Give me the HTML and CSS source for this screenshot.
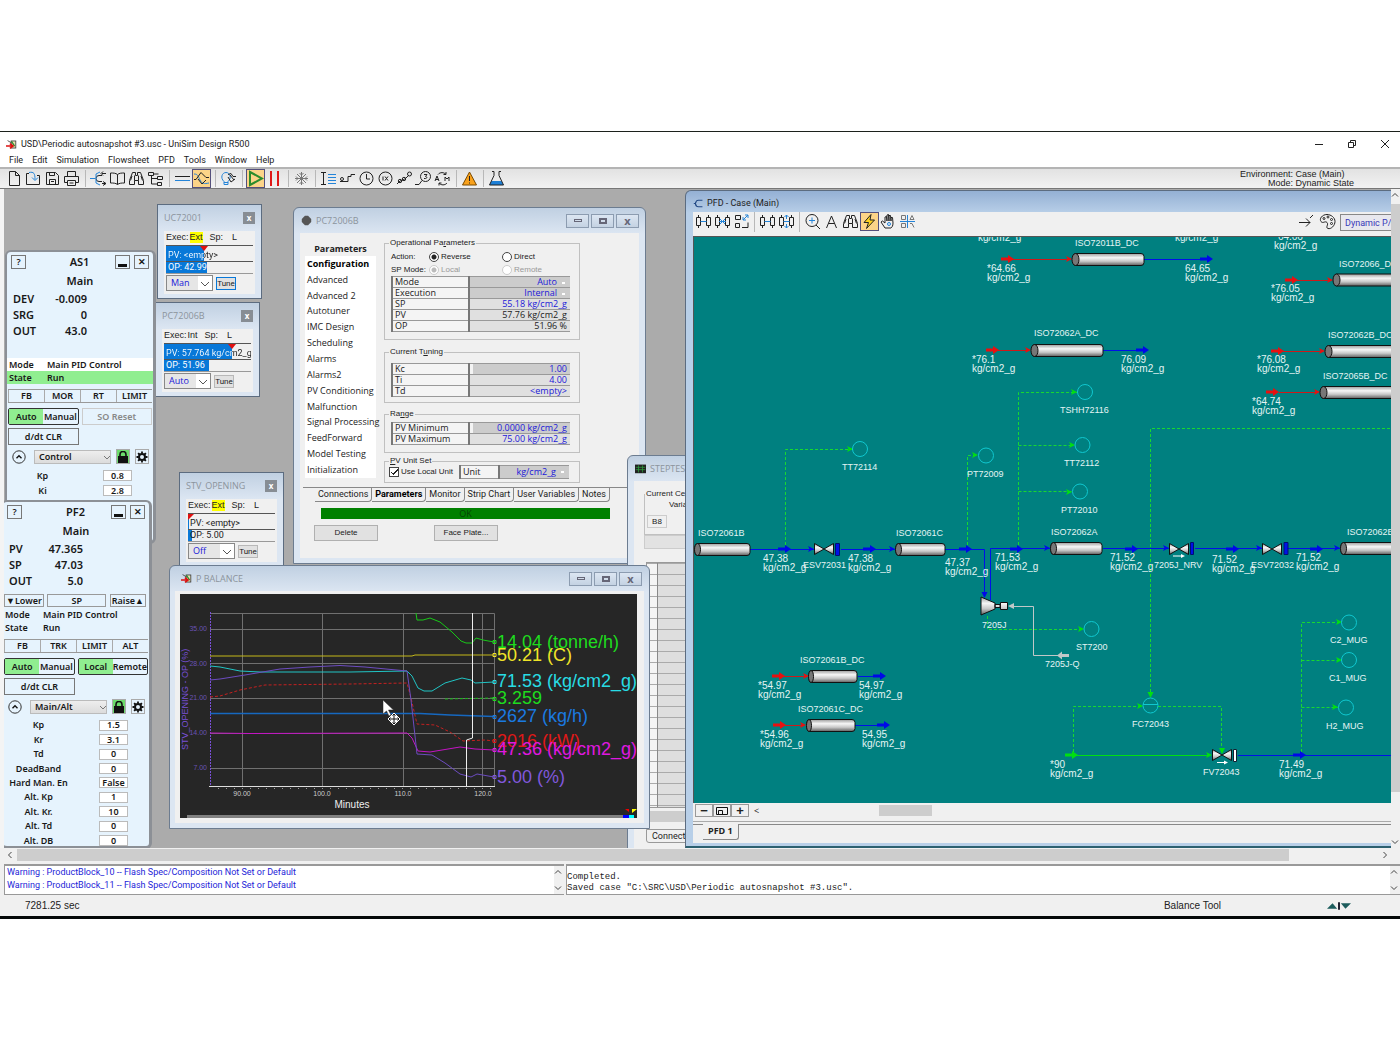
FILE: index.html
```html
<!DOCTYPE html>
<html lang="en">
<head>
<meta charset="utf-8">
<title>UniSim Design R500</title>
<link rel="stylesheet" href="styles.css">
</head>
<body>
<svg class="defs" aria-hidden="true">
  <defs>
    <symbol id="i-trend" viewBox="0 0 14 14"><rect x="6.500" y="2.500" width="6" height="9" fill="#e8e0b0" stroke="#333"/><path d="M7 3l4 6" stroke="#2a8a2a" stroke-width="1.500"/><path d="M0 9h8M5 6l4 3-4 3" stroke="#d11" stroke-width="2" fill="none"/><path d="M2 2l5 3" stroke="#333"/></symbol>
    <symbol id="i-binoc" viewBox="0 0 17 17"><path d="M1.500 14.500h5v-4h4v4h5v-4L12.500 2.500h-3v3h-2v-3h-3L1.500 10.500zM6.500 10.500v-5M10.500 10.500v-5M4 6l-1.500 4.500M13 6l1.500 4.500"/></symbol>
    <symbol id="i-vessels" viewBox="0 0 17 17"><path d="M1.500 4.500h4v8h-4zM11.500 4.500h4v8h-4zM3.500 2v2.500M3.500 12.500V15M13.500 2v2.500M13.500 12.500V15"/><path d="M5.500 8.500h6" stroke="#2484d8"/></symbol>
    <symbol id="i-lock" viewBox="0 0 12 12"><rect x="1" y="5" width="10" height="7" fill="#111"/><path d="M3 5V3.500a3 3 0 0 1 6 0V5" fill="none" stroke="#111" stroke-width="1.600"/></symbol>
    <symbol id="i-gear" viewBox="0 0 12 12"><circle cx="6" cy="6" r="3" fill="none" stroke="#111" stroke-width="2"/><path d="M6 .5v2M6 9.500v2M.5 6h2M9.500 6h2M2.100 2.100l1.400 1.400M8.500 8.500l1.400 1.400M9.900 2.100L8.500 3.500M3.500 8.500L2.100 9.900" stroke="#111" stroke-width="1.800"/></symbol>
    <symbol id="i-up" viewBox="0 0 14 14"><circle cx="7" cy="7" r="6.200" fill="none" stroke="#333"/><path d="M4.500 8.200L7 5.800l2.500 2.400" fill="none" stroke="#111" stroke-width="1.400"/></symbol>
    <linearGradient id="steel" x1="0" y1="0" x2="0" y2="1"><stop offset="0" stop-color="#9c9c9c"/><stop offset=".35" stop-color="#f6f6f6"/><stop offset=".65" stop-color="#c8c8c8"/><stop offset="1" stop-color="#5e5e5e"/></linearGradient>
    <symbol id="s-arrow" viewBox="0 0 13 8"><path d="M0 2.500h7V0l6 4-6 4V5.500H0z" fill="currentColor"/></symbol>
    <symbol id="s-head" viewBox="0 0 6 6"><path d="M0 0l6 3-6 3 1.500-3z" fill="currentColor"/></symbol>
    <symbol id="s-valve" viewBox="0 0 20 12"><path d="M.5.500L10 6 .5 11.500zM19.500.500L10 6l9.500 5.500z" fill="url(#steel)" stroke="#111"/></symbol>
  </defs>
</svg>

<main class="app">
  <header class="titlebar">
    <svg class="ico" viewBox="0 0 14 14"><use href="#i-trend"/></svg>
    <h1>USD\Periodic autosnapshot #3.usc - UniSim Design R500</h1>
    <div class="syscmds">
      <button aria-label="Minimize"><svg viewBox="0 0 10 10"><path d="M1 5.500h8"/></svg></button>
      <button aria-label="Restore"><svg viewBox="0 0 10 10"><path d="M1.500 3.500h5v5h-5zM3.500 3.500v-2h5v5h-2"/></svg></button>
      <button aria-label="Close"><svg viewBox="0 0 10 10"><path d="M1 1l8 8M9 1L1 9"/></svg></button>
    </div>
  </header>
  <nav class="menubar">
    <a href="#">File</a><a href="#">Edit</a><a href="#">Simulation</a><a href="#">Flowsheet</a><a href="#">PFD</a><a href="#">Tools</a><a href="#">Window</a><a href="#">Help</a>
  </nav>
  <div class="toolbar">
    <button aria-label="New"><svg viewBox="0 0 17 17"><path d="M3.500 1.500h6l4 4v10h-10zM9.500 1.500v4h4"/></svg></button>
    <button aria-label="Open"><svg viewBox="0 0 17 17"><path d="M4 3.500H1.500v11h13v-9H12"/><path class="b" d="M4 2.500c5-1 6 1 6 7M7 7.500l3 3 3-3"/></svg></button>
    <button aria-label="Save"><svg viewBox="0 0 17 17"><path d="M2.500 2.500h9l3 3v9h-12zM5.500 2.500v3h5v-3M5.500 14.500v-5h6v5M7 11.500h3"/></svg></button>
    <button aria-label="Print"><svg viewBox="0 0 17 17"><path d="M4.500 6.500v-5h8v5M4.500 12.500h-3v-6h14v6h-3M4.500 10.500h8v5h-8zM6.500 13h4"/></svg></button>
    <i class="sep"></i>
    <button aria-label="Flowsheet"><svg viewBox="0 0 17 17"><path d="M16 3.500h-4M16 13.500h-4M12 5.500H9a3 3 0 0 0 0 6h3M13 1.500l-2 2 2 2M13 11.500l3 2-3 2"/><path class="b" d="M0 8.500h5M10 2L6 4v9l4 2"/></svg></button>
    <button aria-label="Workbook"><svg viewBox="0 0 17 17"><path d="M8.500 4.500c-2-1.500-4-1.500-7-1.500v10c3 0 5 0 7 1.500 2-1.500 4-1.500 7-1.500V3c-3 0-5 0-7 1.500zv10"/></svg></button>
    <button aria-label="Find"><svg viewBox="0 0 17 17"><use href="#i-binoc"/></svg></button>
    <button aria-label="Navigator"><svg viewBox="0 0 17 17"><path d="M1.500 2.500h5v3h-5zM10.500 6.500h5v3h-5zM10.500 12.500h4v3h-4zM4.500 5.500v8.500h6M4.500 8.500h6M6.500 4h5"/></svg></button>
    <i class="sep"></i>
    <button aria-label="Steady state"><svg viewBox="0 0 17 17"><path d="M1 6.500h15"/><path class="b" d="M1 10.500h15"/></svg></button>
    <button class="on" aria-label="Dynamics"><svg viewBox="0 0 17 17"><path class="b" d="M1 4c4 0 4 2 6 6s4 4 9 3"/><path d="M1 9.500h2l5-7 5 5h3M5 9l4 5 4-4"/></svg></button>
    <i class="sep"></i>
    <button aria-label="Assistant"><svg viewBox="0 0 17 17"><path class="b" d="M4 11.500C0 8 2 2.500 6 2.500S12 8 8 11.500v3H4zM4 12.500h4"/><path d="M8 4.500l3-1 2 3h3M8 7l3 5 4-3M10 5l4 5"/></svg></button>
    <i class="sep"></i>
    <button class="on" aria-label="Run"><svg viewBox="0 0 17 17"><path class="g" d="M3 2l12 6.500L3 15z"/></svg></button>
    <button aria-label="Hold"><svg viewBox="0 0 17 17"><path class="r" d="M5 1v15M12 1v15"/></svg></button>
    <i class="sep"></i>
    <button aria-label="Freeze"><svg viewBox="0 0 17 17"><path class="m" d="M8.500 2v13M2 8.500h13M4 4l9 9M13 4l-9 9M6.500 3l2 2 2-2M6.500 14l2-2 2 2M3 6.500l2 2-2 2M14 6.500l-2 2 2 2"/></svg></button>
    <i class="sep"></i>
    <button aria-label="Integrator"><svg viewBox="0 0 17 17"><path d="M1 2.500h5M3.500 2.500v12M1 14.500h5"/><path class="b" d="M8 4.500h8M8 7.500h8M8 10.500h8M8 13.500h8"/></svg></button>
    <button aria-label="Ramp"><svg viewBox="0 0 17 17"><path d="M6 11.500h3v-5h3v-2h4M1 11.500h5"/><circle cx="3" cy="9" r="1.500"/></svg></button>
    <button aria-label="Schedule"><svg viewBox="0 0 17 17"><circle cx="8.500" cy="8.500" r="6.500"/><path d="M8.500 4v5h3.500"/></svg></button>
    <button aria-label="Speed"><svg viewBox="0 0 17 17"><circle cx="8.500" cy="8.500" r="6.500"/><path d="M6 6.500v4M8 6.500l3 4M11 6.500l-3 4"/></svg></button>
    <button aria-label="Events"><svg viewBox="0 0 17 17"><path d="M1 14l3-3 3-1 3-2 3-3"/><circle cx="4" cy="11" r="1.700"/><circle cx="8" cy="9" r="1.700"/><circle cx="13.500" cy="4" r="2"/></svg></button>
    <button aria-label="Snapshot"><svg viewBox="0 0 17 17"><circle cx="10.500" cy="6.500" r="5"/><path d="M9 4.500h3l-1.500 2c2 0 2 2.500-1.500 2M7 10.500l-3 4H0"/></svg></button>
    <button aria-label="Cycle"><svg viewBox="0 0 17 17"><path d="M4 4.500c2-2.500 6-2.500 8 0V2M12 4.500H9.500M13 13c-2 2.500-6 2.500-8 0v2.500M5 13h2.500M1 11l2-5 2 5M1.500 9.500h3M11 11V7l2 2 2-2v4"/></svg></button>
    <i class="sep"></i>
    <button aria-label="Warnings"><svg viewBox="0 0 17 17"><path d="M8.500 2l7 13h-14z" fill="#f9a11b" stroke="#7a4a00"/><path d="M8.500 6v5M8.500 12.500v1"/></svg></button>
    <i class="sep"></i>
    <button aria-label="Lab"><svg viewBox="0 0 17 17"><path d="M3.500 11h10l2 4h-14z" fill="#1d7fd6" stroke="none"/><path d="M4 1.500h2v4L1.500 15h14L11 5.500v-4h2"/></svg></button>
    <p class="env">Environment: Case (Main)<br><span>Mode: Dynamic State</span></p>
  </div>

  <div class="workspace">
    <div class="desktop">

      <section class="win mini uc">
        <header><h2>UC72001</h2><button class="x" aria-label="Close">x</button></header>
        <div class="mbody">
          <p class="exec">Exec: <mark>Ext</mark><span>Sp:</span><span>L</span></p>
          <div class="bar pv"><b class="fill" style="width:44%"></b><span class="two-tone">PV: &lt;empty&gt;</span></div>
          <div class="bar op"><b class="fill" style="width:47%"></b><span class="light">OP: 42.99</span></div>
          <div class="act"><select aria-label="UC72001 mode"><option>Man</option></select><button class="focus">Tune</button></div>
        </div>
      </section>

      <section class="win mini pcs">
        <header><h2>PC72006B</h2><button class="x" aria-label="Close">x</button></header>
        <div class="mbody">
          <p class="exec">Exec:<em>Int</em><span>Sp:</span><span>L</span></p>
          <div class="bar pv"><b class="fill" style="width:78%"></b><span class="two-tone far">PV: 57.764 kg/cm2_g</span></div>
          <div class="bar op"><b class="fill" style="width:52%"></b><span class="light">OP: 51.96</span></div>
          <div class="act"><select aria-label="PC72006B mode"><option>Auto</option></select><button>Tune</button></div>
        </div>
      </section>

      <section class="win mini stv">
        <header><h2>STV_OPENING</h2><button class="x" aria-label="Close">x</button></header>
        <div class="mbody">
          <p class="exec">Exec: <mark>Ext</mark><span>Sp:</span><span>L</span></p>
          <div class="bar pv"><b class="fill zero" style="width:1%"></b><span>PV: &lt;empty&gt;</span></div>
          <div class="bar op"><b class="fill" style="width:5%"></b><span>OP: 5.00</span></div>
          <div class="act"><select aria-label="STV_OPENING mode"><option>Off</option></select><button>Tune</button></div>
        </div>
      </section>

      <section class="plate as1">
        <header><button>?</button><h2>AS1</h2><button aria-label="Minimize" class="min"></button><button>✕</button></header>
        <h3>Main</h3>
        <dl class="big"><dt>DEV</dt><dd>-0.009</dd><dt>SRG</dt><dd>0</dd><dt>OUT</dt><dd>43.0</dd></dl>
        <div class="cmd"></div>
        <dl class="state"><dt class="w">Mode</dt><dd class="w">Main PID Control</dd><dt class="gr">State</dt><dd class="gr">Run</dd></dl>
        <div class="flags"><span>FB</span><span>MOR</span><span>RT</span><span>LIMIT</span></div>
        <div class="modes"><div class="tog"><button class="sel">Auto</button><button>Manual</button></div><button class="wide" disabled>SO Reset</button></div>
        <div class="modes"><button class="wide">d/dt CLR</button></div>
        <div class="pick"><svg viewBox="0 0 14 14"><use href="#i-up"/></svg><select aria-label="AS1 parameter set"><option>Control</option></select><button class="lock" aria-label="Lock"><svg viewBox="0 0 12 12"><use href="#i-lock"/></svg></button><button aria-label="Settings"><svg viewBox="0 0 12 12"><use href="#i-gear"/></svg></button></div>
        <div class="params">
          <label>Kp <input value="0.8"></label><label>Ki <input value="2.8"></label>
        </div>
      </section>

      <section class="plate pf2">
        <header><button>?</button><h2>PF2</h2><button aria-label="Minimize" class="min"></button><button>✕</button></header>
        <h3>Main</h3>
        <dl class="big"><dt>PV</dt><dd>47.365</dd><dt>SP</dt><dd>47.03</dd><dt>OUT</dt><dd>5.0</dd></dl>
        <div class="cmd"><button>▼Lower</button><button class="sp">SP</button><button>Raise▲</button></div>
        <dl class="state"><dt>Mode</dt><dd>Main PID Control</dd><dt>State</dt><dd>Run</dd></dl>
        <div class="flags"><span>FB</span><span>TRK</span><span>LIMIT</span><span>ALT</span></div>
        <div class="modes"><div class="tog"><button class="sel">Auto</button><button>Manual</button></div><div class="tog"><button class="sel">Local</button><button>Remote</button></div></div>
        <div class="modes"><button class="wide">d/dt CLR</button></div>
        <div class="pick"><svg viewBox="0 0 14 14"><use href="#i-up"/></svg><select aria-label="PF2 parameter set"><option>Main/Alt</option></select><button class="lock" aria-label="Lock"><svg viewBox="0 0 12 12"><use href="#i-lock"/></svg></button><button aria-label="Settings"><svg viewBox="0 0 12 12"><use href="#i-gear"/></svg></button></div>
        <div class="params">
          <label>Kp <input value="1.5"></label><label>Kr <input value="3.1"></label><label>Td <input value="0"></label><label>DeadBand <input value="0"></label><label>Hard Man. En <input value="False"></label><label>Alt. Kp <input value="1"></label><label>Alt. Kr. <input value="10"></label><label>Alt. Td <input value="0"></label><label>Alt. DB <input value="0"></label>
        </div>
      </section>

      <section class="win frame pc">
        <header><svg class="ico" viewBox="0 0 14 14"><path d="M5 1h4l4 4v4l-4 4H5L1 9V5z" fill="#555"/></svg><h2>PC72006B</h2><div class="wbtns"><button aria-label="Minimize"><i class="wmin"></i></button><button aria-label="Maximize"><i class="wmax"></i></button><button aria-label="Close"><i>x</i></button></div></header>
        <div class="pcbody">
          <div class="cols">
            <div class="side">
              <h3>Parameters</h3>
              <ul><li class="cur">Configuration</li><li>Advanced</li><li>Advanced 2</li><li>Autotuner</li><li>IMC Design</li><li>Scheduling</li><li>Alarms</li><li>Alarms2</li><li>PV Conditioning</li><li>Malfunction</li><li>Signal Processing</li><li>FeedForward</li><li>Model Testing</li><li>Initialization</li></ul>
            </div>
            <div class="sets">
              <fieldset class="f1"><legend>Operational Pa<u>r</u>ameters</legend>
                <div class="radios"><span>Action:</span><label><input type="radio" name="act" checked>Reverse</label><label><input type="radio" name="act">Direct</label></div>
                <div class="radios"><span>SP Mode:</span><label class="dis"><input type="radio" name="sp" checked disabled>Local</label><label class="dis"><input type="radio" name="sp" disabled>Remote</label></div>
                <table><tr><th>Mode</th><td class="cb">Auto</td></tr><tr><th>Execution</th><td class="cb">Internal</td></tr><tr><th>SP</th><td>55.18 kg/cm2_g</td></tr><tr><th>PV</th><td class="k">57.76 kg/cm2_g</td></tr><tr><th>OP</th><td class="k">51.96 %</td></tr></table>
              </fieldset>
              <fieldset class="f2"><legend>Current T<u>u</u>ning</legend>
                <table><tr><th>Kc</th><td class="cell">1.00</td></tr><tr><th>Ti</th><td>4.00</td></tr><tr><th>Td</th><td>&lt;empty&gt;</td></tr></table>
              </fieldset>
              <fieldset class="f3"><legend>Ra<u>n</u>ge</legend>
                <table><tr><th>PV Minimum</th><td class="cell">0.0000 kg/cm2_g</td></tr><tr><th>PV Maximum</th><td>75.00 kg/cm2_g</td></tr></table>
              </fieldset>
              <fieldset class="f4"><legend><u>P</u>V Unit Set</legend>
                <div class="unit"><label><input type="checkbox" checked>Use Local Unit</label><table><tr><th>Unit</th><td class="cb">kg/cm2_g</td></tr></table></div>
              </fieldset>
            </div>
          </div>
          <div class="tabs"><a href="#">Connections</a><a href="#" class="cur">Parameters</a><a href="#">Monitor</a><a href="#">Strip Chart</a><a href="#">User Variables</a><a href="#">Notes</a></div>
          <div class="ok">OK</div>
          <div class="btns"><button>Delete</button><button>Face Plate...</button></div>
        </div>
      </section>

      <section class="win frame step">
        <header><svg class="ico" viewBox="0 0 14 14"><rect y="2" width="14" height="11" fill="#222"/><path d="M1 5.500h12M1 8.500h12M4.500 3v9M9.500 3v9" stroke="#2c9a3c"/></svg><h2>STEPTEST</h2></header>
        <div class="stbody">
          <fieldset><legend>Current Cell</legend><p>Variable</p><output>B8</output></fieldset>
          <div class="gray"></div>
          <div class="sheet"></div>
          <div class="sbar"></div>
          <div class="sttab">Connections</div>
        </div>
      </section>

      <section class="win frame pbal">
        <header><svg class="ico" viewBox="0 0 14 14"><use href="#i-trend"/></svg><h2>P BALANCE</h2><div class="wbtns"><button aria-label="Minimize"><i class="wmin"></i></button><button aria-label="Maximize"><i class="wmax"></i></button><button aria-label="Close"><i>x</i></button></div></header>
        <div class="chart">
          <svg viewBox="180 594 457 224" width="457" height="224" fill="none">
            <path d="M242.500 613v173M322.500 613v173M403.500 613v173M482.500 613v173M210 629.500h284M210 663.500h284M210 698.500h284M210 733.500h284M210 768.500h284M210 613.500h284.500V786" stroke="#707070"/>
            <path d="M210.500 612v174" stroke="#7a50d8" stroke-dasharray="2 1"/>
            <path d="M209 786.500h286" stroke="#ddd"/><path d="M218 788.500h276" stroke="#999" stroke-dasharray="1 7"/>
            <path d="M210 713.500h210l30 1.500 44 1.500" stroke="#1668c0" stroke-width="1.500"/>
            <path d="M210 666l10 1 20 4 20 1h90l57-1 5 5 6 12 6 3h8l13-8 17-5 9 2 4 3 19-1" stroke="#20c4c4"/>
            <path d="M210 697l10-1 20-6 25-5 85-1 57-1 4 15 6 26 18 1 15 7 13 9 22-1 9 1" stroke="#c42020" stroke-dasharray="3 2"/>
            <path d="M210 733l40 .5 157-.5 5 5 6 13 12 1 30-5 15 2 19 1" stroke="#c414c4"/>
            <path d="M210 680l10-1 25-4 35-6 30-2 30-1.500 25 1.500 42 4 4 29 6 54 15 1 13 8 15 11 11 3 6-3 17 3" stroke="#6c4cc0"/>
            <path d="M210 656h202l3-1h79" stroke="#c4b818"/>
            <path d="M445 699l49-1" stroke="#18b818" stroke-dasharray="3 2"/>
            <path d="M416 613l1 7h6l7-2 10 4 12 10 9 9 5 2h6l4-5 7 2 11 2" stroke="#18c818"/>
            <path d="M472.500 613v125l-6 2v46" stroke="#eee"/>
            <g class="big">
              <text x="497" y="648" fill="#1edc1e">14.04 (tonne/h)</text><text x="497" y="661" fill="#f0e428">50.21 (C)</text><text x="497" y="687" fill="#28dce4">71.53 (kg/cm2_g)</text><text x="497" y="704" fill="#1edc1e">3.259</text><text x="497" y="722" fill="#1a7ae0">2627 (kg/h)</text><text x="497" y="747" fill="#e01818">2016 (kW)</text><text x="497" y="755" fill="#e018e0">47.36 (kg/cm2_g)</text><text x="497" y="783" fill="#8058dc">5.00 (%)</text>
            </g>
            <path d="M493 640.500h3v3h-3z" stroke="#1edc1e"/><path d="M493 653.500h3v3h-3z" stroke="#f0e428"/><path d="M493 680.500h3v3h-3z" stroke="#28dce4"/><path d="M493 697.500h3v3h-3z" stroke="#1edc1e"/><path d="M493 715.500h3v3h-3z" stroke="#1a7ae0"/><path d="M493 739.500h3v3h-3z" stroke="#e01818"/><path d="M493 748.500h3v3h-3z" stroke="#e018e0"/><path d="M493 775.500h3v3h-3z" stroke="#8058dc"/>
            <g class="tick" fill="#6a52b4" text-anchor="end"><text x="207" y="631">35.00</text><text x="207" y="666">28.00</text><text x="207" y="700">21.00</text><text x="207" y="735">14.00</text><text x="207" y="770">7.00</text></g>
            <g class="tick" fill="#ccc" text-anchor="middle"><text x="242" y="796">90.00</text><text x="322" y="796">100.0</text><text x="403" y="796">110.0</text><text x="483" y="796">120.0</text></g>
            <text class="min" x="352" y="808" fill="#eee" text-anchor="middle">Minutes</text>
            <text class="axis" transform="translate(188 750) rotate(-90)" fill="#7a50d8">STV_OPENING - OP (%)</text>
            <path d="M187 816.500h436" stroke="#808080" stroke-width="3"/>
            <path d="M623 815h6v3h-6z" fill="#00f"/><path d="M629 815h5v3h-5z" fill="#0ff"/><path d="M625 809h4v3z" fill="#e00"/><path d="M632 809h5l-5 4z" fill="#ff0"/>
            <path d="M383 700v14l3.500-3 2.500 5 2-1-2.500-5h5z" fill="#fff" stroke="#222" stroke-width=".5"/>
            <path d="M394 713l6 6-6 6-6-6z" fill="#fff" stroke="#fff"/><path d="M394 714v10M389 719h10M392.500 715.500l1.500-1.500 1.500 1.500M392.500 722.500l1.500 1.500 1.500-1.500M390.500 717.500L389 719l1.500 1.500M397.500 717.500l1.500 1.500-1.500 1.500" stroke="#111"/>
          </svg>
        </div>
      </section>

      <section class="win pfd">
        <header><svg class="ico" viewBox="0 0 14 14"><path d="M12 3H7a4 4 0 0 0 0 8h5M1 7h2M5 3L3 7l2 4" fill="none" stroke="#234a86" stroke-width="1.300"/></svg><h2>PFD - Case (Main)</h2></header>
        <div class="toolbar tight">
          <button aria-label="Attach"><svg viewBox="0 0 17 17"><use href="#i-vessels"/></svg></button>
          <button aria-label="Auto attach"><svg viewBox="0 0 17 17"><use href="#i-vessels"/><path class="b" d="M6 6l5 5M11 6l-5 5M5 8.500h7"/></svg></button>
          <button aria-label="Resize"><svg viewBox="0 0 17 17"><path d="M2.500 2.500h5v4h-5zM2.500 10.500h4v4h-4zM9 14.500h6v-5"/><path class="b" d="M10 7l5-5M12 2h3v3M10 4v3h3"/></svg></button>
          <i class="sep"></i>
          <button aria-label="Break"><svg viewBox="0 0 17 17"><use href="#i-vessels"/></svg></button>
          <button aria-label="Swap"><svg viewBox="0 0 17 17"><use href="#i-vessels"/><path class="b" d="M8.500 2v4M8.500 11v4M6.500 4l2-2 2 2M6.500 13l2 2 2-2M6 8.500h5"/></svg></button>
          <i class="sep"></i>
          <button aria-label="Zoom"><svg viewBox="0 0 17 17"><circle cx="8" cy="7.500" r="6"/><path d="M12 12l4 4"/><path class="b" d="M5 7.500h6M8 4.500v6"/></svg></button>
          <button aria-label="Text"><svg viewBox="0 0 17 17"><path d="M3.500 15l5-12 5 12M5.500 10.500h6"/></svg></button>
          <button aria-label="Find object"><svg viewBox="0 0 17 17"><use href="#i-binoc"/></svg></button>
          <button class="on" aria-label="Quick route"><svg viewBox="0 0 17 17"><path d="M10 1.500l-7 8h4.500l-2 6 8-8.500H9z" fill="#ffd21e"/></svg></button>
          <button aria-label="Pan"><svg viewBox="0 0 17 17"><path d="M5 15l-4-6 1.500-1L5 10V4l1.500-.5L7 8V2l1.500-.5L9 8V2.500h1.500L11 8V4.500h1.500L13 10c0 3-1 4-2 5z"/><circle class="b" cx="9" cy="11" r="1.500"/></svg></button>
          <button aria-label="Layers"><svg viewBox="0 0 17 17"><path class="m" d="M2.500 2.500h4v4h-4zM2.500 10.500h4v4h-4zM11 6.500l2-4 2 4zM11 10.500h2l2 4"/><path class="b" d="M1 8.500h15M8.500 2v13"/></svg></button>
          <span class="push"></span>
          <button aria-label="Go to parent"><svg viewBox="0 0 17 17"><path d="M2 9.500h11M9 5.500l4 4-4 4M13 5l3-3"/></svg></button>
          <button class="pal" aria-label="Colours"><svg viewBox="0 0 17 17"><path d="M8 1.500C3 1.500 0 6 2 8.500s4-1 6 1-2 5 1 6 7-3 7-7-4-7-8-7z"/><circle cx="5" cy="5.500" r="1"/><circle cx="9" cy="4" r="1"/><circle cx="12.500" cy="6.500" r="1"/><circle cx="12.500" cy="10.500" r="1"/></svg></button>
          <select aria-label="Colour scheme"><option>Dynamic P/</option></select>
        </div>
        <div class="canvas">
          <svg viewBox="694 237 706 566" width="706" height="566" fill="none">
            <g class="sig">
              <path d="M785.500 545v-95.500H853M967.500 545v-89.500H978M1018.500 545V392.500H1077M1018.500 445.500H1074M1018.500 491.500H1072M1150.500 697V428.500H1400M1073.500 752v-45.500H1143M1158 706.500h63.500v43M1301.500 752V622.500H1342M1301.500 660.500H1342M1301.500 707.500H1338M987.500 616v13.500H1083"/>
            </g>
            <g color="#00e010">
              <use href="#s-head" x="847" y="446" width="6" height="6"/><use href="#s-head" x="972" y="452" width="6" height="6"/><use href="#s-head" x="1071" y="389" width="6" height="6"/><use href="#s-head" x="1069" y="442" width="6" height="6"/><use href="#s-head" x="1066" y="489" width="6" height="6"/><use href="#s-head" x="1078" y="626" width="6" height="6"/><use href="#s-head" x="1137" y="703" width="6" height="6"/><use href="#s-head" x="1336" y="619" width="6" height="6"/><use href="#s-head" x="1336" y="657" width="6" height="6"/><use href="#s-head" x="1332" y="704" width="6" height="6"/><use href="#s-head" x="1206" y="752" width="6" height="6"/>
              <path d="M1147.500 692l3 6 3-6z" fill="#00e010"/><path d="M1065 755.500h143" stroke="#00e010"/><use href="#s-arrow" x="1065" y="751" width="13" height="8"/>
            </g>
            <g stroke="#10c8d0"><circle cx="860" cy="449" r="7.500"/><circle cx="986" cy="455.500" r="7.500"/><circle cx="1085" cy="392" r="7.500"/><circle cx="1082.500" cy="445" r="7.500"/><circle cx="1080" cy="491.500" r="7.500"/><circle cx="1091.500" cy="629" r="7.500"/><circle cx="1150.500" cy="705.500" r="7.500"/><path d="M1143 704.500h15"/><circle cx="1349" cy="622.500" r="7.500"/><circle cx="1349" cy="660" r="7.500"/><circle cx="1346" cy="707.500" r="7.500"/></g>
            <path d="M750 549.500h64M841 549.500h54M945 549.500h39.500V597M990.500 600v-51.500H1050M1103 548.500h66M1195 548.500h67M1288 548.500h52M1144 259.500h60M1103 350.500h36M858 676.500h18M855 725.500h25M1238 755.500h162" stroke="#0010e8"/>
            <g color="#0008e8">
              <use href="#s-arrow" x="778" y="545" width="13" height="8"/><use href="#s-arrow" x="863" y="545" width="13" height="8"/><use href="#s-arrow" x="959" y="545" width="13" height="8"/><use href="#s-arrow" x="1010" y="545" width="13" height="8"/><use href="#s-arrow" x="1125" y="545" width="13" height="8"/><use href="#s-arrow" x="1226" y="545" width="13" height="8"/><use href="#s-arrow" x="1310" y="545" width="13" height="8"/><use href="#s-arrow" x="1200" y="255" width="13" height="8"/><use href="#s-arrow" x="1136" y="346" width="13" height="8"/><use href="#s-arrow" x="873" y="672" width="13" height="8"/><use href="#s-arrow" x="877" y="721" width="13" height="8"/><use href="#s-arrow" x="1293" y="751" width="13" height="8"/>
              <use href="#s-head" x="808" y="546" width="6" height="6"/><use href="#s-head" x="889" y="546" width="6" height="6"/><use href="#s-head" x="1044" y="545" width="6" height="6"/><use href="#s-head" x="1163" y="545" width="6" height="6"/><use href="#s-head" x="1256" y="545" width="6" height="6"/><use href="#s-head" x="1334" y="545" width="6" height="6"/><path d="M981.500 592l3 6 3-6z" fill="#0008e8"/>
            </g>
            <path d="M1012 259.500h56M998 350.500h30M1297 280.500h33M1283 351.500h39M1279 392.500h38M784 676.500h22M785 725.500h19" stroke="#d01818"/>
            <g color="#e81010">
              <use href="#s-arrow" x="1001" y="255" width="13" height="8"/><use href="#s-arrow" x="986" y="346" width="13" height="8"/><use href="#s-arrow" x="1285" y="276" width="13" height="8"/><use href="#s-arrow" x="1271" y="347" width="13" height="8"/><use href="#s-arrow" x="1266" y="388" width="13" height="8"/><use href="#s-arrow" x="772" y="672" width="13" height="8"/><use href="#s-arrow" x="773" y="721" width="13" height="8"/>
              <use href="#s-head" x="1066" y="256" width="6" height="6"/><use href="#s-head" x="1025" y="347" width="6" height="6"/><use href="#s-head" x="1327" y="277" width="6" height="6"/><use href="#s-head" x="1319" y="348" width="6" height="6"/><use href="#s-head" x="1314" y="389" width="6" height="6"/><use href="#s-head" x="803" y="673" width="6" height="6"/><use href="#s-head" x="800" y="722" width="6" height="6"/>
            </g>
            <g fill="url(#steel)" stroke="#111">
              <rect x="695" y="543.500" width="55" height="12" rx="3"/><rect x="896" y="543.500" width="49" height="12" rx="3"/><rect x="1051" y="542.500" width="51" height="12" rx="3"/><rect x="1341" y="542.500" width="80" height="12" rx="3"/><rect x="1073" y="253.500" width="71" height="12" rx="3"/><rect x="1032" y="344.500" width="71" height="12" rx="3"/><rect x="1334" y="274" width="90" height="12" rx="3"/><rect x="1326" y="345.500" width="90" height="12" rx="3"/><rect x="1321" y="386.500" width="90" height="12" rx="3"/><rect x="809" y="670.500" width="48" height="12" rx="3"/><rect x="807" y="719.500" width="48" height="12" rx="3"/>
              <path d="M981 597l14 6v6l-14 6zM995 604.500h5v3h-5zM1000.500 602.500h7v7h-7z"/>
            </g>
            <g fill="#777" stroke="#111"><ellipse cx="697.500" cy="549.500" rx="3" ry="6"/><ellipse cx="898.500" cy="549.500" rx="3" ry="6"/><ellipse cx="1053.500" cy="548.500" rx="3" ry="6"/><ellipse cx="1343.500" cy="548.500" rx="3" ry="6"/><ellipse cx="1075.500" cy="259.500" rx="3.500" ry="6"/><ellipse cx="1034.500" cy="350.500" rx="3.500" ry="6"/><ellipse cx="1336.500" cy="280" rx="3.500" ry="6"/><ellipse cx="1328.500" cy="351.500" rx="3.500" ry="6"/><ellipse cx="1323.500" cy="392.500" rx="3.500" ry="6"/><ellipse cx="811" cy="676.500" rx="2.500" ry="6"/><ellipse cx="809" cy="725.500" rx="2.500" ry="6"/></g>
            <use href="#s-valve" x="814" y="543" width="20" height="12"/><use href="#s-valve" x="1169" y="543" width="20" height="12"/><use href="#s-valve" x="1262" y="543" width="20" height="12"/><use href="#s-valve" x="1212" y="749" width="20" height="12"/>
            <path d="M1219 748l3 6 3-6z" fill="#00e010"/>
            <path d="M835.500 543.500h4v12h-4zM1190.500 542.500h3v12h-3zM1284 542.500h4v12h-4z" fill="#0010e8" stroke="#001070"/><path d="M1233.500 749.500h3v12h-3z" fill="#fff" stroke="#123"/>
            <path d="M1173 555.500h8v-1.500l4 2-4 2v-1.500h-8zM1217 762h7v-1.500l4 2-4 2V763h-7z" fill="#fff"/>
            <path d="M1012 606.500h21.500v49H1058" stroke="#c0c8c8"/><path d="M1014 603l-6 3 6 3zM1069 654h-7v-2.500l-5 4 5 4V657h7z" fill="#c0c8c8"/>
            <g class="name">
              <text x="1075" y="246">ISO72011B_DC</text><text x="1034" y="336">ISO72062A_DC</text><text x="1339" y="267">ISO72066_DC</text><text x="1328" y="338">ISO72062B_DC</text><text x="1323" y="379">ISO72065B_DC</text><text x="842" y="470">TT72114</text><text x="967" y="477">PT72009</text><text x="1060" y="413">TSHH72116</text><text x="1064" y="466">TT72112</text><text x="1061" y="513">PT72010</text><text x="698" y="536">ISO72061B</text><text x="896" y="536">ISO72061C</text><text x="1051" y="535">ISO72062A</text><text x="1347" y="535">ISO72062B</text><text x="803" y="568">ESV72031</text><text x="1154" y="568">7205J_NRV</text><text x="1251" y="568">ESV72032</text><text x="982" y="628">7205J</text><text x="1076" y="650">ST7200</text><text x="1045" y="667">7205J-Q</text><text x="800" y="663">ISO72061B_DC</text><text x="798" y="712">ISO72061C_DC</text><text x="1132" y="727">FC72043</text><text x="1203" y="775">FV72043</text><text x="1330" y="643">C2_MUG</text><text x="1329" y="681">C1_MUG</text><text x="1326" y="729">H2_MUG</text>
            </g>
            <g class="val">
              <text x="978" y="241">kg/cm2_g</text><text x="1175" y="241">kg/cm2_g</text><text x="1274" y="240">*64.66</text><text x="1274" y="249">kg/cm2_g</text>
              <text x="987" y="272">*64.66<tspan x="987" dy="9">kg/cm2_g</tspan></text><text x="1185" y="272">64.65<tspan x="1185" dy="9">kg/cm2_g</tspan></text><text x="1271" y="292">*76.05<tspan x="1271" dy="9">kg/cm2_g</tspan></text><text x="972" y="363">*76.1<tspan x="972" dy="9">kg/cm2_g</tspan></text><text x="1121" y="363">76.09<tspan x="1121" dy="9">kg/cm2_g</tspan></text><text x="1257" y="363">*76.08<tspan x="1257" dy="9">kg/cm2_g</tspan></text><text x="1252" y="405">*64.74<tspan x="1252" dy="9">kg/cm2_g</tspan></text>
              <text x="763" y="562">47.38<tspan x="763" dy="9">kg/cm2_g</tspan></text><text x="848" y="562">47.38<tspan x="848" dy="9">kg/cm2_g</tspan></text><text x="945" y="566">47.37<tspan x="945" dy="9">kg/cm2_g</tspan></text><text x="995" y="561">71.53<tspan x="995" dy="9">kg/cm2_g</tspan></text><text x="1110" y="561">71.52<tspan x="1110" dy="9">kg/cm2_g</tspan></text><text x="1212" y="563">71.52<tspan x="1212" dy="9">kg/cm2_g</tspan></text><text x="1296" y="561">71.52<tspan x="1296" dy="9">kg/cm2_g</tspan></text>
              <text x="758" y="689">*54.97<tspan x="758" dy="9">kg/cm2_g</tspan></text><text x="859" y="689">54.97<tspan x="859" dy="9">kg/cm2_g</tspan></text><text x="760" y="738">*54.96<tspan x="760" dy="9">kg/cm2_g</tspan></text><text x="862" y="738">54.95<tspan x="862" dy="9">kg/cm2_g</tspan></text><text x="1050" y="768">*90<tspan x="1050" dy="9">kg/cm2_g</tspan></text><text x="1279" y="768">71.49<tspan x="1279" dy="9">kg/cm2_g</tspan></text>
            </g>
          </svg>
        </div>
        <div class="zoombar"><button>−</button><button aria-label="Fit"><svg viewBox="0 0 12 8"><path d="M.5.500h11v7H.5zM2.500 3.500h4v4h-4z" fill="none" stroke="#111"/></svg></button><button>+</button><span>&lt;</span><i></i></div>
        <div class="sheets"><a href="#">PFD 1</a></div>
      </section>
    </div>
    <div class="vscroll"><svg viewBox="0 0 8 8"><path d="M1 5.500l3-3 3 3"/></svg><i></i><svg viewBox="0 0 8 8"><path d="M1 2.500l3 3 3-3"/></svg></div>
  </div>
  <div class="hscroll"><svg viewBox="0 0 8 8"><path d="M5.500 1l-3 3 3 3"/></svg><i></i><svg viewBox="0 0 8 8"><path d="M2.500 1l3 3-3 3"/></svg></div>
  <div class="logs">
    <div class="log warn"><div><p>Warning : ProductBlock_10 -- Flash Spec/Composition Not Set or Default</p><p>Warning : ProductBlock_11 -- Flash Spec/Composition Not Set or Default</p></div><div class="ud"><svg viewBox="0 0 8 8"><path d="M1 5.500l3-3 3 3"/></svg><svg viewBox="0 0 8 8"><path d="M1 2.500l3 3 3-3"/></svg></div></div>
    <div class="log trace"><div><p>Completed.</p><p>Saved case "C:\SRC\USD\Periodic autosnapshot #3.usc".</p></div><div class="ud"><svg viewBox="0 0 8 8"><path d="M1 5.500l3-3 3 3"/></svg><svg viewBox="0 0 8 8"><path d="M1 2.500l3 3 3-3"/></svg></div></div>
  </div>
  <footer class="status"><span>7281.25 sec</span><span class="bal">Balance Tool</span><svg viewBox="0 0 26 8"><path d="M0 7h11L6 1zM15 1h11l-6 6z" fill="#1c5c5c"/><path d="M13 0v8" stroke="#112" stroke-width="2"/></svg></footer>
</main>
</body>
</html>
```
FILE: styles.css
```css
* { box-sizing: border-box; }
body { margin: 0; background: #fff; color: #222; font: 9px/12px "Open Sans", "Noto Sans", sans-serif; }
h1, h2, h3, p, dl, dd, ul, fieldset { margin: 0; padding: 0; font-size: inherit; }
h1, h2, h3 { font-weight: normal; }
ul { list-style: none; }
a { color: inherit; text-decoration: none; }
button, select, input { font: inherit; color: inherit; margin: 0; padding: 0; border: 0; border-radius: 0; background: none; }
select { appearance: none; }
svg { display: block; }
.defs { position: absolute; width: 0; height: 0; }

.app { margin-top: 131px; border-top: 1px solid #1c211c; border-bottom: 3px solid #050808; background: #f0f0f0; }
.titlebar { display: flex; align-items: center; gap: 4px; height: 22px; padding: 2px 10px 0 6px; background: #fff; }
.titlebar, .menubar, .tabs, .warn, .bar { font-family: Roboto, "Open Sans", sans-serif; }
.ico { width: 11px; height: 11px; flex: none; }
.syscmds { display: flex; gap: 23px; margin-left: auto; }
.syscmds button { width: 10px; height: 10px; }
.syscmds svg, .toolbar svg { fill: none; stroke: #222; }
.menubar { display: flex; gap: 9px; height: 13px; padding: 0 9px; background: #fff; }

.toolbar { display: flex; align-items: center; height: 22px; padding: 0 46px 0 5px; border-top: 2px solid #b4b4b4; border-bottom: 1px solid #777; background: linear-gradient(#e2e2e2, #f2f2f2); }
.toolbar button { width: 19px; height: 19px; padding: 1px; flex: none; }
.toolbar button svg { width: 17px; height: 17px; }
.toolbar .on { padding: 0; border: 1px solid #54507c; background: #fcd488; }
.toolbar .b { stroke: #2484d8; }
.toolbar .g { stroke: #2c8c2c; stroke-width: 2; }
.toolbar .r { stroke: #e01818; stroke-width: 2; }
.toolbar .m { stroke: #777; }
.sep { width: 1px; height: 17px; margin: 0 3px 0 4px; background: #b8b8b8; flex: none; }
.env { margin-left: auto; font: 9px/9px "Liberation Sans", sans-serif; white-space: nowrap; }
.env span { display: inline-block; margin-left: 28px; }

.workspace { display: flex; }
.desktop { position: relative; flex: 1; height: 659px; overflow: hidden; border-left: 4px solid #f4f4f4; background: #ababab; }
.vscroll { display: flex; flex-direction: column; justify-content: space-between; width: 9px; background: #f0f0f0; }
.vscroll svg, .hscroll svg, .ud svg { width: 8px; height: 8px; margin: 2px 0; fill: none; stroke: #444; }
.vscroll i { flex: 1; margin: 3px 0 44px; background: #cdcdcd; }
.hscroll { display: flex; align-items: center; height: 14px; padding: 0 11px 0 6px; background: #f0f0f0; }
.hscroll i { flex: 1; height: 12px; margin: 0 92px 0 3px; background: #cdcdcd; }

.win { position: absolute; border: 1px solid #5c6c80; background: linear-gradient(#c0d0e2, #dce6f2 26px); }
.win > header { display: flex; align-items: center; color: #8c949c; }
.mini { width: 105px; height: 95px; padding: 0 6px; }
.uc { left: 153px; top: 15px; }
.pcs { left: 151px; top: 113px; }
.stv { left: 175px; top: 283px; }
.mini header { justify-content: space-between; height: 26px; }
.mini .x { width: 12px; height: 12px; background: #878d94; color: #fff; font: bold 8px/10px "Open Sans", sans-serif; }
.mbody { padding: 0 2px 3px; background: #f0f0f0; }
.exec { display: flex; height: 14px; line-height: 13px; font-family: "Liberation Sans", sans-serif; gap: 1px; }
.exec mark { background: #ff0; color: inherit; line-height: 11px; margin: 1px 0 2px; }
.exec em { font-style: normal; }
.exec span { margin-left: 6px; }
.exec span + span { margin-left: 8px; }
.bar { position: relative; height: 12px; line-height: 11px; border-bottom: 1px solid #999; }
.bar.pv { height: 17px; padding-top: 4px; border-top: 1px solid #555; border-bottom-color: #555; }
.bar span { position: relative; display: block; padding-left: 2px; white-space: nowrap; }
.fill { position: absolute; left: 0; top: 0; bottom: 0; background: #0878d8; }
.pv .fill::after { content: ""; position: absolute; right: -4px; top: 0; border: 4px solid transparent; border-top: 5px solid #e01010; border-bottom: 0; }
.pv .zero::after { right: auto; left: 0; border-left: 0; border-right-width: 6px; border-top-width: 6px; }
.bar .light { color: #fff; }
.bar .two-tone { color: transparent; background: linear-gradient(90deg, #fff 44%, #222 44%); background-clip: text; }
.bar .two-tone.far { background: linear-gradient(90deg, #fff 78%, #222 78%); background-clip: text; }
.act { display: flex; gap: 3px; margin-top: 1px; }
.act select { width: 47px; height: 16px; padding-left: 4px; border: 1px solid #888; color: #2018d8; background: linear-gradient(45deg, transparent 45%, #555 45% 60%, transparent 60%) 34px 6px / 4px 4px no-repeat, linear-gradient(-45deg, transparent 45%, #555 45% 60%, transparent 60%) 38px 6px / 4px 4px no-repeat, linear-gradient(90deg, #e6e6e6 31px, #fff 31px); }
.act button { width: 20px; height: 13px; margin-top: 2px; border: 1px solid #b8b8b8; background: #e1e1e1; font: 8px/10px Roboto, sans-serif; }
.act .focus { border: 1px solid #0878d8; }

.plate { position: absolute; width: 151px; padding: 2px 0 0; border: 2px solid #8c9096; border-width: 2px 3px 3px 2px; border-radius: 6px; background: #e6f3fd; font-family: "Noto Sans", sans-serif; font-weight: 600; font-size: 9px; color: #181818; }
.as1 { left: 1px; top: 61px; height: 294px; }
.pf2 { left: -3px; top: 311px; height: 349px; }
.plate header { display: flex; gap: 4px; height: 16px; padding: 1px 4px; align-items: center; }
.plate header h2 { flex: 1; text-align: center; padding-left: 18px; font-size: 11px; font-weight: 600; }
.plate header button { width: 15px; height: 14px; border: 1px solid #777; line-height: 12px; }
.plate .min { padding: 7px 2px 0; }
.plate .min::after { content: ""; display: block; height: 3px; background: #111; }
.plate h3 { height: 21px; line-height: 21px; text-align: center; font-size: 11px; font-weight: 600; }
.big { display: grid; grid-template-columns: 32px 42px; padding-left: 6px; font-size: 11px; line-height: 16px; }
.big dd { text-align: right; }
.cmd { display: flex; justify-content: space-between; height: 19px; padding: 5px 3px 1px 1px; }
.cmd button { border: 1px solid #999; padding: 0 1px; line-height: 10px; }
.cmd .sp { width: 59px; }
.state { display: grid; grid-template-columns: 40px 1fr; line-height: 13px; }
.state dt { padding-left: 2px; }
.w { background: #fff; }
.gr { background: #90ee90; }
.flags { display: grid; grid-template-columns: repeat(4, 1fr); margin: 5px 1px; border: 1px solid #999; border-width: 1px 0; }
.flags span { text-align: center; line-height: 12px; border-left: 1px solid #aaa; }
.modes { display: flex; gap: 3px; margin: 0 1px 3px; }
.tog, .wide { width: 71px; height: 17px; border: 1px solid #777; }
.tog { display: flex; border-radius: 2px; border-color: #333; }
.tog button { flex: 1; line-height: 14px; }
.sel { background: #90ee90; }
.wide:disabled { color: #888; border-color: #ccc; }
.pick { display: flex; align-items: center; gap: 5px; padding: 1px 4px 1px 5px; }
.pick > svg { width: 14px; height: 14px; margin-right: 3px; flex: none; }
.pick select { width: 80px; height: 14px; padding-left: 4px; border: 1px solid #bbb; background: linear-gradient(45deg, transparent 40%, #777 40% 65%, transparent 65%) 69px 5px / 3px 3px no-repeat, linear-gradient(-45deg, transparent 40%, #777 40% 65%, transparent 65%) 72px 5px / 3px 3px no-repeat, linear-gradient(#eee, #dcdcdc); }
.pick button { width: 14px; height: 15px; border: 1px solid #aaa; flex: none; }
.pick .lock { background: #6cdc6c; }
.pick button svg { width: 12px; height: 12px; }
.params { display: grid; padding-top: 3px; }
.as1 .params { grid-auto-rows: 15px; }
.pf2 .params { height: 133px; grid-auto-rows: 1fr; }
.params label { display: grid; grid-template-columns: 71px 29px; gap: 25px; align-items: center; text-align: center; white-space: nowrap; }
.params input { width: 29px; height: 11px; border: 1px solid #bbb; background: #fff; text-align: center; }

.frame { border-radius: 6px 6px 0 0; border-color: #6c7c90; }
.frame > header { height: 25px; padding: 0 6px; gap: 4px; }
.wbtns { display: flex; gap: 2px; margin-left: auto; }
.wbtns button { display: grid; place-items: center; width: 23px; height: 14px; border: 1px solid #8c9cb0; background: linear-gradient(#dce6f2, #c4d2e2); }
.wbtns i { font: bold 11px/8px "Open Sans", sans-serif; color: #667; }
.wmin { width: 8px; height: 3px; border: 1px solid #667; }
.wmax { width: 8px; height: 6px; border: 2px solid #667; }

.pc { left: 289px; top: 18px; width: 353px; height: 357px; padding: 0 6px 6px; }
.pc > header { padding: 0 0 0 1px; }
.pcbody { height: 325px; background: #f0f0f0; }
.cols { display: flex; gap: 8px; height: 254px; padding: 10px 0 0 5px; }
.side { width: 71px; }
.side h3 { height: 13px; line-height: 12px; text-align: center; font-weight: bold; }
.side ul { display: grid; grid-auto-rows: 1fr; height: 222px; background: #fff; }
.side li { display: flex; align-items: center; padding-left: 2px; white-space: nowrap; }
.side .cur, .tabs .cur { font-weight: bold; color: #000; }
.sets { width: 196px; font: 8px/12px "Liberation Sans", sans-serif; }
fieldset { position: relative; border: 1px solid #c0c0c0; }
.sets fieldset { padding-left: 6px; }
legend { position: absolute; left: 4px; top: -7px; padding: 0 1px; background: #f0f0f0; }
.f1 { height: 97px; padding-top: 6px; margin-bottom: 12px; }
.f2 { height: 51px; padding-top: 10px; margin-bottom: 11px; }
.f3 { height: 39px; padding-top: 7px; margin-bottom: 8px; }
.f4 { height: 22px; padding-top: 3px; }
.radios { display: grid; grid-template-columns: 38px 73px 60px; height: 13px; align-items: center; white-space: nowrap; }
.radios label, .unit label { display: flex; align-items: center; gap: 2px; white-space: nowrap; }
.sets input { appearance: none; flex: none; width: 10px; height: 10px; border: 1px solid #444; border-radius: 50%; background: #fff; }
.sets input[type=radio]:checked { background: radial-gradient(circle, #222 0 2px, #fff 3px); }
.sets .dis { color: #999; }
.sets .dis input { border-color: #ccc; background: #fff; }
.sets .dis input:checked { background: radial-gradient(circle, #bbb 0 2px, #fff 3px); }
.sets input[type=checkbox] { border-radius: 0; background: linear-gradient(-45deg, transparent 45%, #222 45% 60%, transparent 60%) 3px 1px / 5px 6px no-repeat, linear-gradient(45deg, transparent 40%, #222 40% 60%, transparent 60%) 1px 4px / 3px 3px no-repeat, #fff; }
.sets table { width: 179px; border-collapse: collapse; font: 9px/10px "Open Sans", sans-serif; table-layout: fixed; }
.sets th, .sets td { height: 11px; padding: 0 3px 0 2px; border: 1px solid #999; font-weight: normal; white-space: nowrap; }
.sets th { width: 77px; text-align: left; background: #f4f4f4; border-left: 2px solid #777; }
.sets td { text-align: right; color: #2018d8; background: #e0e0e0; border-left: 2px solid #777; border-right: 0; }
.sets tr:first-child td { background-color: #ccc; }
.sets td.k { color: #222; }
.sets td.cb { padding-right: 13px; background: linear-gradient(#fff, #fff) right 5px top 5px / 3px 2px no-repeat, #ccc; }
.sets .cell { box-shadow: inset 3px 0 #f4f4f4; }
.unit { display: flex; justify-content: space-between; padding: 0 10px 0 0; }
.unit label { margin-left: -2px; }
.unit table { width: 110px; }
.unit th { width: 39px; }
.unit th, .unit td { height: 13px; }
.tabs { display: flex; margin: 0 0 0 3px; padding: 0 20px 0 12px; border-top: 1px solid #888; }
.tabs a { height: 14px; padding: 0 3px; line-height: 12px; border: 1px solid #888; border-width: 0 1px 1px 0; border-radius: 0 0 4px 0; white-space: nowrap; }
.ok { margin: 6px 29px 0 21px; height: 11px; line-height: 11px; background: #008000; color: #054005; text-align: center; }
.btns { display: flex; gap: 56px; padding: 6px 14px; font: 8px/12px "Liberation Sans", sans-serif; }
.btns button { width: 64px; height: 16px; border: 1px solid #b0b0b0; background: #e1e1e1; }

.step { left: 623px; top: 266px; width: 200px; height: 394px; padding: 0 6px; }
.step > header { padding: 0 1px; }
.stbody { background: #f0f0f0; padding: 13px 0 0 10px; height: 368px; }
.stbody fieldset { height: 41px; padding: 4px 0 0 24px; font: 8px/12px "Liberation Sans", sans-serif; }
.stbody legend { left: 0; }
.stbody output { display: block; width: 20px; height: 13px; margin: 4px 0 0 -22px; border: 1px solid #ccc; text-align: center; }
.gray { height: 14px; margin-bottom: 13px; background: #e2e2e2; border: 1px solid #ccc; }
.sheet { height: 246px; margin-left: 2px; border: 1px solid #999; background: linear-gradient(90deg, transparent 10px, #888 10px 11px, transparent 11px), repeating-linear-gradient(#aaa 0 1px, transparent 1px 11px), linear-gradient(90deg, #f4f4f4 10px, #dedede 10px); }
.sbar { height: 11px; margin: 3px 0 7px 4px; background: #cdcdcd; }
.sttab { width: 70px; margin-left: 2px; padding: 0 5px; border: 1px solid #999; border-radius: 0 0 3px 3px; font-family: Roboto, sans-serif; }

.pbal { left: 165px; top: 376px; width: 481px; height: 264px; padding: 0 5px; }
.pbal > header { padding-right: 2px; }
.chart { height: 232px; padding: 3px 0 5px 5px; background: #f0f0f0; }
.chart svg { background: #262626; }
.chart text { font-family: "Liberation Sans", sans-serif; font-size: 9px; }
.chart .big text { font-size: 18px; }
.chart .tick text { font-size: 7px; }
.chart .min { font-size: 10px; }

.pfd { left: 681px; top: 1px; right: -2px; height: 658px; padding: 0 0 4px 7px; border-radius: 6px 0 0 0; border-bottom: 2px solid #2c6070; background: linear-gradient(#94b0d4, #b8cfe8 22px); }
.pfd > header { height: 21px; padding-top: 3px; gap: 3px; color: #222; font-family: Roboto, sans-serif; }
.pfd > .toolbar { height: 24px; padding: 0 0 5px 1px; border: 0; background: #f0f0f0; }
.tight .sep { margin: 0 3px; height: 20px; }
.tight .push { flex: 1; }
.tight select { width: 52px; height: 17px; margin: 2px 0 0 3px; padding-left: 4px; border: 1px solid #888; color: #3838b8; background: #e8e8ee; font-family: Roboto, sans-serif; }
.tight .pal { margin-left: 3px; }
.canvas { height: 567px; overflow: hidden; border-left: 1px solid #555; border-top: 1px solid #555; background: #008080; }
.canvas text { font-family: "Liberation Sans", sans-serif; fill: #e4f4f4; }
.name text { font-size: 9px; }
.val text { font-size: 10px; }
.sig { stroke: #18d830; stroke-dasharray: 3 2; }
.zoombar { display: flex; align-items: center; height: 15px; padding-left: 2px; background: #f0f0f0; }
.zoombar button { display: grid; place-items: center; width: 18px; height: 13px; border: 1px solid #999; font: bold 13px/10px "Liberation Sans", sans-serif; }
.zoombar svg { width: 12px; height: 8px; }
.zoombar span { width: 130px; padding-left: 5px; }
.zoombar i { width: 53px; height: 11px; background: #cdcdcd; }
.sheets { height: 25px; padding: 6px 0 0 10px; background: linear-gradient(#888, #888) 0 6px / 100% 1px no-repeat, linear-gradient(#aaa, #aaa) 0 3px / 100% 1px no-repeat, #f0f0f0; }
.sheets a { display: inline-block; padding: 1px 5px 2px; background: #f0f0f0; border: 1px solid #888; border-width: 0 1px 1px 0; border-radius: 0 0 3px 0; font-weight: bold; }

.logs { display: grid; grid-template-columns: 560px 1fr; gap: 2px; padding: 2px 0 0 4px; }
.log { display: flex; justify-content: space-between; height: 31px; border: 1px solid #999; border-width: 2px 0 1px 1px; background: #fff; }
.ud { display: flex; flex-direction: column; justify-content: space-between; width: 10px; background: #f0f0f0; }
.warn { color: #2424d8; line-height: 13px; padding-left: 2px; }
.trace { font: 9px/11px "Liberation Mono", monospace; }
.trace > div:first-child { padding-top: 6px; }
.status { display: flex; align-items: center; height: 21px; padding: 0 49px 0 25px; font: 10px/12px "Liberation Sans", sans-serif; }
.status .bal { margin-left: auto; margin-right: 106px; }
.status svg { width: 24px; height: 8px; }
```
